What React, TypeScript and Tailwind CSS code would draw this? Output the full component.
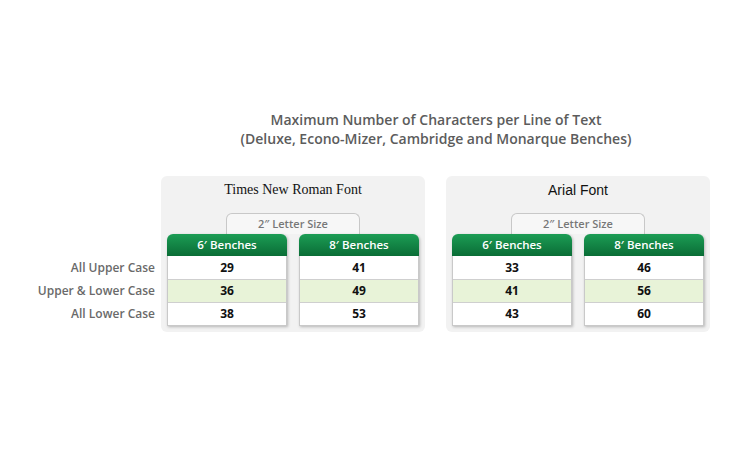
const rowLabels = ["All Upper Case", "Upper & Lower Case", "All Lower Case"];

const panels = [
  {
    title: "Times New Roman Font",
    font: "font-['Liberation_Serif',serif]",
    six: ["29", "36", "38"],
    eight: ["41", "49", "53"],
  },
  {
    title: "Arial Font",
    font: "font-['Liberation_Sans',sans-serif]",
    six: ["33", "41", "43"],
    eight: ["46", "56", "60"],
  },
];

const BenchColumn = ({ label, values }: { label: string; values: string[] }) => (
  <div className="w-[120px] shadow-[1px_1px_3px_rgba(0,0,0,0.25)] rounded-t-[6px]">
    <div className="h-[22px] rounded-t-[6px] bg-gradient-to-b from-[#1c9d55] to-[#0a6d36] flex items-center justify-center text-white text-[11.5px] font-semibold">
      {label}
    </div>
    <div className="border border-t-0 border-[#c9c9c9]">
      {values.map((v, i) => (
        <div
          key={i}
          className={`h-[23px] flex items-center justify-center text-[12px] font-bold text-[#111] ${
            i === 1 ? "bg-[#e8f3d8]" : "bg-white"
          } ${i > 0 ? "border-t border-[#cfcfcf]" : ""}`}
        >
          {v}
        </div>
      ))}
    </div>
  </div>
);

export default function App() {
  return (
    <div className="w-[753px] h-[475px] bg-white font-['Open_Sans',sans-serif]">
      <div className="ml-[161px] w-[550px] pt-[110px] text-center text-[14px] leading-[19px] font-semibold text-[#5c5c5c]">
        <p>Maximum Number of Characters per Line of Text</p>
        <p>(Deluxe, Econo-Mizer, Cambridge and Monarque Benches)</p>
      </div>

      <div className="flex mt-[28px]">
        <div className="w-[161px] pt-[80px] pr-[6px]">
          {rowLabels.map((l) => (
            <div
              key={l}
              className="h-[23px] flex items-center justify-end text-[12px] font-semibold text-[#6a6a6a]"
            >
              {l}
            </div>
          ))}
        </div>

        <div className="flex gap-[21px]">
          {panels.map((p) => (
            <div key={p.title} className="w-[264px] h-[156px] rounded-[6px] bg-[#f2f2f2] px-[6px]">
              <div className={`pt-[6px] h-[37px] text-center text-[14px] leading-[16px] text-[#111] ${p.font}`}>
                {p.title}
              </div>
              <div className="ml-[59px] w-[134px] h-[21px] border border-b-0 border-[#c8c8c8] rounded-t-[6px] bg-[#f7f7f7] flex items-center justify-center text-[11px] font-semibold text-[#777]">
                2″ Letter Size
              </div>
              <div className="flex gap-[12px]">
                <BenchColumn label="6′ Benches" values={p.six} />
                <BenchColumn label="8′ Benches" values={p.eight} />
              </div>
            </div>
          ))}
        </div>
      </div>
    </div>
  );
}
